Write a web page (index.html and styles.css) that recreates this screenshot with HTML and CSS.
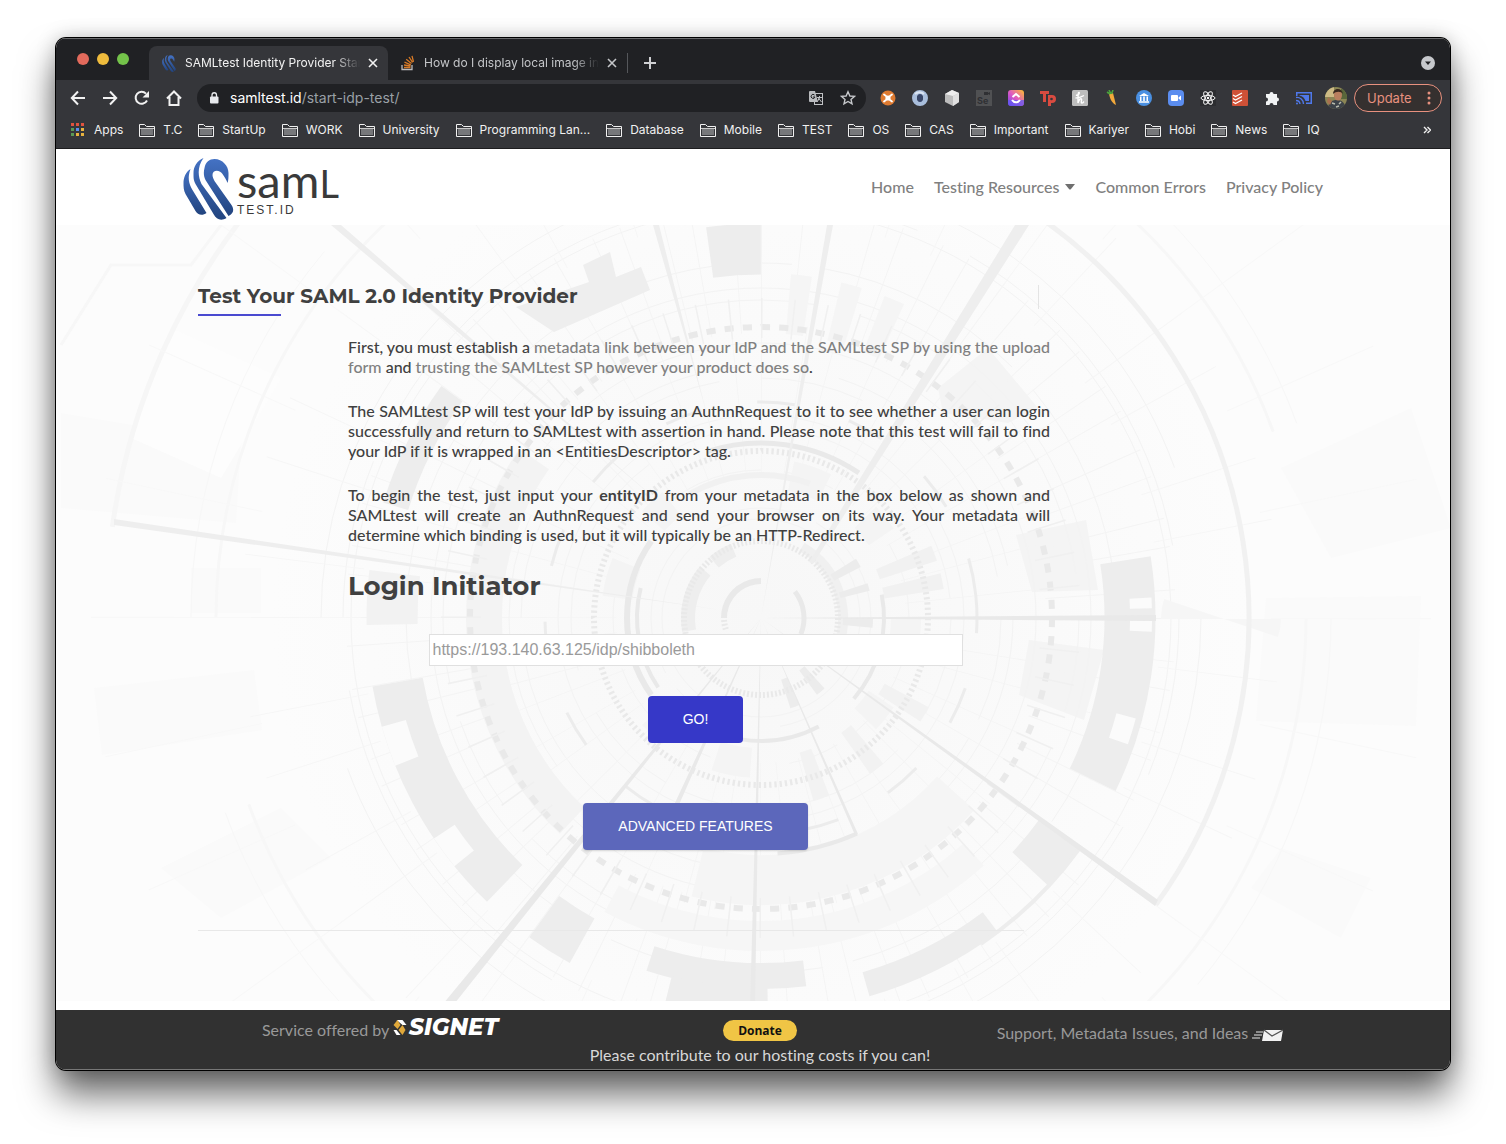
FILE: index.html
```html
<!DOCTYPE html>
<html lang="en">
<head>
<meta charset="utf-8">
<meta name="viewport" content="width=device-width, initial-scale=1">
<title>SAMLtest Identity Provider Start</title>
<link rel="stylesheet" href="styles.css">
</head>
<body>
<svg class="defs" width="0" height="0" aria-hidden="true">
  <defs>
    <linearGradient id="blue" x1="0" y1="0" x2="0" y2="1"><stop offset="0" stop-color="#4472c4"/><stop offset="1" stop-color="#22447f"/></linearGradient>
    <symbol id="swan" viewBox="0 0 50 62">
      <g fill="url(#blue)">
        <path d="M7 11C2 14 0 20 0 25c0 4 0 7 2 11l10 17c2 4 7 5 11 2L9 32C5 25 4 19 7 11z"/>
        <path d="M20 0C13 3 10 9 10 15c0 5 0 7 2 11l18 30c3 6 8 7 13 4L18 26C14 18 14 8 20 0z"/>
        <path d="M21 10C22 4 26 1 31 1c8 0 14 7 14 14 0 4 0 7-1 10-1-3-3-6-5-9-2-4-10-5-10 1 0 2 1 4 2 6l17 24c3 5 2 8-3 11L22 22c-2-4-2-8-1-12z"/>
      </g>
    </symbol>
    <symbol id="folder" viewBox="0 0 16 14">
      <path d="M.5 13.500V1.500h5l2 2h8v10z" fill="none" stroke="#f1f1f1"/>
      <path d="M2 6h12v6H2z" fill="#77787b"/><path d="M1 5.500h14" stroke="#c8c8c8"/>
    </symbol>
    <symbol id="close" viewBox="0 0 10 10"><path d="M1 1l8 8M9 1L1 9" stroke="currentColor" stroke-width="1.600" fill="none"/></symbol>
  </defs>
</svg>

<div class="window">
  <div class="tabstrip">
    <div class="lights"><i class="red"></i><i class="yellow"></i><i class="green"></i></div>
    <div class="tab active">
      <svg width="16" height="17"><use href="#swan"/></svg>
      <span class="tab-title">SAMLtest Identity Provider Start</span>
      <button class="icon-button" aria-label="Close tab"><svg width="10" height="10"><use href="#close"/></svg></button>
    </div>
    <div class="tab">
      <svg width="16" height="16" viewBox="0 0 16 16" fill="none"><path d="M2 10v4.500h10V10" stroke="#bcbbbb" stroke-width="1.300"/><path d="M4 12.500h6.500M4 10l6.500 1M4.500 7.200l6.300 2.600M6.200 4.200l5.300 4.200M9 2l3.600 5.300M12 .8l1.500 6" stroke="#d87a26" stroke-width="1.300"/></svg>
      <span class="tab-title">How do I display local image in</span>
      <button class="icon-button" aria-label="Close tab"><svg width="10" height="10"><use href="#close"/></svg></button>
    </div>
    <button class="icon-button new-tab" aria-label="New tab"><svg width="14" height="14" viewBox="0 0 14 14"><path d="M7 1v12M1 7h12" stroke="#cfd0d3" stroke-width="2"/></svg></button>
    <button class="icon-button tab-search" aria-label="Search tabs"><svg width="14" height="14" viewBox="0 0 14 14"><circle cx="7" cy="7" r="7" fill="#c6c8cc"/><path d="M4 5.500h6L7 9z" fill="#202124"/></svg></button>
  </div>

  <div class="toolbar">
    <div class="nav-buttons">
      <button class="icon-button" aria-label="Back"><svg width="16" height="16" viewBox="0 0 16 16" fill="none" stroke="#f1f1f1" stroke-width="2"><path d="M15 8H2M8 1.500L1.800 8 8 14.500"/></svg></button>
      <button class="icon-button" aria-label="Forward"><svg width="16" height="16" viewBox="0 0 16 16" fill="none" stroke="#f1f1f1" stroke-width="2"><path d="M1 8h13M8 1.500L14.200 8 8 14.500"/></svg></button>
      <button class="icon-button" aria-label="Reload"><svg width="16" height="16" viewBox="0 0 16 16"><path d="M13 10.500A6 6 0 1 1 12 3.600" fill="none" stroke="#f1f1f1" stroke-width="2"/><path d="M15 1v6.500H8.500z" fill="#f1f1f1"/></svg></button>
      <button class="icon-button" aria-label="Home"><svg width="16" height="16" viewBox="0 0 16 16" fill="none" stroke="#f1f1f1" stroke-width="2"><path d="M1 8.500L8 1.500l7 7M3.500 7v8h9V7"/></svg></button>
    </div>
    <div class="address">
      <svg width="10" height="14" viewBox="0 0 10 14"><rect x="1" y="5.500" width="8.500" height="7" rx="1" fill="#e8eaed"/><path d="M3 6V4a2.200 2.200 0 0 1 4.500 0v2" fill="none" stroke="#e8eaed" stroke-width="1.300"/></svg>
      <span class="url"><b>samltest.id</b>/start-idp-test/</span>
      <svg width="16" height="16" viewBox="0 0 16 16"><rect x="6.500" y="3.500" width="8" height="11" fill="none" stroke="#c0c2c5"/><path d="M2 1h5l3 11H2a1 1 0 0 1-1-1V2a1 1 0 0 1 1-1z" fill="#b9bbbe"/><path d="M6.500 5A2 2 0 1 0 7 7H5" fill="none" stroke="#202124"/><path d="M9 7.500h5M11.500 6v1.500l-2 4M10.500 8l3 4" fill="none" stroke="#c0c2c5"/></svg>
      <svg width="16" height="16" viewBox="0 0 16 16"><path d="M8 1.800l1.900 4.200 4.500.4-3.400 3 1 4.500L8 11.500l-4 2.400 1-4.500-3.400-3L6.100 6z" fill="none" stroke="#c6c8cb" stroke-width="1.400"/></svg>
    </div>
    <div class="extensions">
      <svg viewBox="0 0 16 16"><circle cx="8" cy="8" r="7.500" fill="#dd7a31"/><circle cx="8" cy="8" r="2.600" fill="#fff"/><path d="M4 4.500l2 1.500M12 4.500L10 6M4 11.500L6 10M12 11.500L10 10" stroke="#fff" stroke-width="1.800" stroke-linecap="round"/></svg>
      <svg viewBox="0 0 16 16"><circle cx="8" cy="8" r="5.500" fill="none" stroke="#a9bedc" stroke-width="5"/><path d="M3 4a7 7 0 0 1 9 0" fill="none" stroke="#dbe5f3" stroke-width="2"/><ellipse cx="8" cy="8" rx="3" ry="4" fill="#39476a"/></svg>
      <svg viewBox="0 0 16 16"><path d="M8 0l7 3v9l-6 4-8-4V4z" fill="#bcbcbc"/><path d="M1 4l7-4 7 3-6 3z" fill="#ededed"/><path d="M9 6l6-3v9l-6 4z" fill="#e0e0e0"/></svg>
      <svg viewBox="0 0 16 16"><path d="M0 0h16v16H0z" fill="#505153"/><path d="M8 2h4v3H8zM12 3l2-1v3l-2-1z" fill="#2f3033"/><text x="1" y="14" font-family="Inter, sans-serif" font-weight="700" font-size="9" fill="#2f3033">Se</text></svg>
      <svg viewBox="0 0 16 16"><defs><linearGradient id="cu" x1="0" y1="1" x2="1" y2="0"><stop offset="0" stop-color="#7a3cf0"/><stop offset=".5" stop-color="#e05bc0"/><stop offset="1" stop-color="#ffc02b"/></linearGradient></defs><rect width="16" height="16" rx="3" fill="url(#cu)"/><path d="M0 10h16v3a3 3 0 0 1-3 3H3a3 3 0 0 1-3-3z" fill="#5b5bf5" opacity=".7"/><path d="M4.500 7L8 4l3.500 3M4 10c2 3 6 3 8 0" fill="none" stroke="#fff" stroke-width="2"/></svg>
      <svg viewBox="0 0 16 16"><path d="M0 1h9v3H6v8H3V4H0zM8 5h4a3.500 3.500 0 0 1 0 8h-1v3H8z" fill="#d94b40"/><circle cx="11.500" cy="9" r="1.300" fill="#35363a"/></svg>
      <svg viewBox="0 0 16 16"><rect width="16" height="16" rx="1.500" fill="#bdbdbd"/><path d="M4 5c2 1 4-2 3-2.500S6 6 6 13c1-4 3-5 3.500-4s-1 4 .5 4 1.500-1 2-1.500M3.500 8c2 0 6-1 8.500-2.500" fill="none" stroke="#fff" stroke-width="1.400"/></svg>
      <svg viewBox="0 0 16 16"><path d="M5 4l4-1 3 12c-4-2-6-6-7-11z" fill="#f2a93b"/><path d="M6 4L3 2M7 4L5 0M7.500 4L9 0" stroke="#4ba33c" stroke-width="1.600"/></svg>
      <svg viewBox="0 0 16 16"><circle cx="8" cy="8" r="8" fill="#4a90e2"/><path d="M8 3l5 3H3zM4 6.500h1.500V11H4zM7.200 6.500h1.600V11H7.200zM10.500 6.500H12V11h-1.500zM3 11.300h10v1.400H3z" fill="#fff"/></svg>
      <svg viewBox="0 0 16 16"><rect width="16" height="16" rx="4" fill="#5b8def"/><rect x="3" y="5" width="7" height="6" rx="1" fill="#fff"/><path d="M10.500 7.500L13 5.500v5l-2.500-2z" fill="#fff"/></svg>
      <svg viewBox="0 0 16 16"><path d="M0 0h16v16H0z" fill="#2c2d30"/><g fill="none" stroke="#f4f4f4" stroke-width="1"><ellipse cx="8" cy="8" rx="7" ry="2.600"/><ellipse cx="8" cy="8" rx="7" ry="2.600" transform="rotate(60 8 8)"/><ellipse cx="8" cy="8" rx="7" ry="2.600" transform="rotate(120 8 8)"/></g><circle cx="8" cy="8" r="1.200" fill="#fff"/></svg>
      <svg viewBox="0 0 16 16"><rect width="16" height="16" rx="1" fill="#cf5137"/><path d="M1 5l2.500 1.500L10 3M1 8.500L3.500 10 10 6.500M1 12l2.500 1.500L10 10" fill="none" stroke="#fff" stroke-width="1.300"/></svg>
      <svg viewBox="0 0 16 16"><path d="M2 4h3.500a2 2 0 1 1 4 0H13v3.500a2 2 0 1 1 0 4V15H9.500a2 2 0 0 0-4 0H2v-3.500a2 2 0 0 0 0-4z" fill="#f1f3f4"/></svg>
      <svg viewBox="0 0 16 16"><path d="M0 2h16v12h-6v-1.500h4.500v-9h-13V6H0z" fill="#4f78ea"/><path d="M3.500 5h9.500v6H9.500C9 8.500 6.500 6 3.500 5.500z" fill="#4f78ea"/><path d="M0 7.500A6.500 6.500 0 0 1 7.500 14M0 10.500A4 4 0 0 1 4 14" fill="none" stroke="#4f78ea" stroke-width="1.400"/><circle cx="1" cy="13.500" r="1" fill="#4f78ea"/></svg>
    </div>
    <svg class="avatar" viewBox="0 0 22 22"><defs><clipPath id="round"><circle cx="11" cy="11" r="11"/></clipPath></defs><g clip-path="url(#round)"><path d="M0 0h22v22H0z" fill="#8b8655"/><path d="M0 0h9v10H0z" fill="#cdbb85"/><path d="M16 2h6v10h-6z" fill="#59663a"/><path d="M3 22c0-7 4-9 9-9s8 3 9 9z" fill="#3c4248"/><path d="M7 16l3 1M14 17l2-2M11 20l3-1" stroke="#b9bcae" stroke-width="1.500"/><ellipse cx="13" cy="8" rx="4" ry="5.500" fill="#b97f5f"/><path d="M8 7c0-6 9-7 10 0-2-3-7-3-10 0z" fill="#38291f"/><path d="M3 10l4 4-2 4-3-3z" fill="#a9714f"/></g></svg>
    <button class="update">Update<svg width="4" height="14" viewBox="0 0 4 14" fill="#e8917f"><circle cx="2" cy="2" r="1.500"/><circle cx="2" cy="7" r="1.500"/><circle cx="2" cy="12" r="1.500"/></svg></button>
  </div>

  <nav class="bookmarks" aria-label="Bookmarks">
    <a href="#"><svg viewBox="0 0 16 14"><path d="M1 0h3v3H1zM6 0h3v3H6zM11 0h3v3h-3z" fill="#e0533f"/><path d="M1 5h3v3H1zM1 10h3v3H1z" fill="#5a9a55"/><path d="M6 5h3v3H6z" fill="#5b8def"/><path d="M11 5h3v3h-3zM6 10h3v3H6zM11 10h3v3h-3z" fill="#e8b23f"/></svg>Apps</a>
    <a href="#"><svg><use href="#folder"/></svg>T.C</a>
    <a href="#"><svg><use href="#folder"/></svg>StartUp</a>
    <a href="#"><svg><use href="#folder"/></svg>WORK</a>
    <a href="#"><svg><use href="#folder"/></svg>University</a>
    <a href="#"><svg><use href="#folder"/></svg>Programming Lan...</a>
    <a href="#"><svg><use href="#folder"/></svg>Database</a>
    <a href="#"><svg><use href="#folder"/></svg>Mobile</a>
    <a href="#"><svg><use href="#folder"/></svg>TEST</a>
    <a href="#"><svg><use href="#folder"/></svg>OS</a>
    <a href="#"><svg><use href="#folder"/></svg>CAS</a>
    <a href="#"><svg><use href="#folder"/></svg>Important</a>
    <a href="#"><svg><use href="#folder"/></svg>Kariyer</a>
    <a href="#"><svg><use href="#folder"/></svg>Hobi</a>
    <a href="#"><svg><use href="#folder"/></svg>News</a>
    <a href="#"><svg><use href="#folder"/></svg>IQ</a>
    <button class="icon-button more" aria-label="More bookmarks"><svg width="8" height="8" viewBox="0 0 8 8"><path d="M1 1l3 3-3 3M4.500 1l3 3-3 3" fill="none" stroke="#f1f1f1" stroke-width="1.400"/></svg></button>
  </nav>

  <header class="site-header">
    <div class="container header-row">
      <a class="logo" href="#">
        <svg width="51" height="62"><use href="#swan"/></svg>
        <span class="logo-text"><span class="logo-name">sam<small>L</small></span><span class="logo-sub">TEST.ID</span></span>
      </a>
      <nav class="site-nav">
        <a href="#">Home</a>
        <a href="#">Testing Resources<svg width="10" height="6" viewBox="0 0 10 6"><path d="M0 0h10L6 5q-1 1-2 0z" fill="#6f6f6f"/></svg></a>
        <a href="#">Common Errors</a>
        <a href="#">Privacy Policy</a>
      </nav>
    </div>
  </header>

  <main class="hero">
    <svg class="art" viewBox="0 0 1394 776" preserveAspectRatio="xMidYMid slice" aria-hidden="true">
      <defs><radialGradient id="haze"><stop offset="0" stop-color="#f7f7f7"/><stop offset=".6" stop-color="#fafafa"/><stop offset="1" stop-color="#fcfcfc"/></radialGradient></defs>
      <path d="M0 0h1394v776H0z" fill="#fcfcfc"/>
      <g transform="translate(705 393)" fill="none" stroke="#ebebeb">
        <circle r="490" fill="url(#haze)" stroke="none"/>
        <!-- large faint panels -->
        <g fill="#fafafa" stroke="none">
          <path d="M-700-205l180 30-5 80-175-15zM-667 70l160-18 8 60-160 25zM-600 250l120-60 50 50-110 60zM-570-50h70v45h-70zM520-150l130-60 40 120-120 30zM505-20l155-2-5 130-160-5zM520 230l90 30-30 60-90-50z"/>
          <path d="M-590-290l110 50-60 100-90-40z" fill="#fdfdfd"/>
          <path d="M177-230l50-40 50 60-30 15-65-10zM255-83l70-15 12 70-66 2zM268 22l75 10-20 70-65-25z" fill="#f4f4f4"/>
        </g>
        <!-- thin construction circles -->
        <g stroke="#f3f3f3" stroke-width="1">
          <circle r="99"/><circle r="110" pathLength="360" stroke-dasharray="80 20 40 10"/><circle r="148" pathLength="360" stroke-dasharray="50 9 20 31"/><circle r="190" pathLength="360" stroke-dasharray="30 14 70 6"/><circle r="203"/><circle r="240" pathLength="360" stroke-dasharray="25 5 50 10"/><circle r="252" pathLength="360" stroke-dasharray="60 12"/><circle r="275"/><circle r="318" pathLength="360" stroke-dasharray="17 7 40 8"/><circle r="330"/><circle r="355" pathLength="360" stroke-dasharray="35 5"/><circle r="410"/><circle r="418" pathLength="360" stroke-dasharray="22 8 50 10"/><circle r="440" pathLength="360" stroke-dasharray="70 20"/><circle r="545" stroke="#f7f7f7" stroke-width="3" pathLength="360" stroke-dasharray="70 20"/><circle r="570" stroke="#f7f7f7" pathLength="360" stroke-dasharray="40 20"/><circle r="655" stroke="#f6f6f6" stroke-width="5" pathLength="360" stroke-dasharray="32 328" transform="rotate(188)"/>
        </g>
        <!-- fine spokes, drawn as thin slices of wide rings -->
        <g stroke="#f4f4f4">
          <circle r="220" stroke-width="150" pathLength="360" stroke-dasharray=".2 8.800 .2 5.800"/>
          <circle r="350" stroke-width="130" pathLength="360" stroke-dasharray=".15 5.850 .15 3.850"/>
          <circle r="460" stroke-width="120" pathLength="360" stroke-dasharray=".12 6.880 .12 10.880" stroke="#f6f6f6"/>
          <circle r="590" stroke-width="160" pathLength="360" stroke-dasharray=".1 11.900" stroke="#f8f8f8"/>
        </g>
        <!-- broad translucent bands -->
        <g stroke="#f3f3f3">
          <circle r="277" stroke-width="36" pathLength="360" stroke-dasharray="82 278" transform="rotate(133)"/>
          <circle r="262" stroke-width="50" pathLength="360" stroke-dasharray="62 298" transform="rotate(42)" stroke="#f5f5f5"/>
          <circle r="318" stroke-width="30" pathLength="360" stroke-dasharray="70 290" transform="rotate(48)" stroke="#f6f6f6"/>
          <circle r="145" stroke-width="30" pathLength="360" stroke-dasharray="14 20 10 50" stroke="#f4f4f4"/>
          <circle r="315" stroke-width="60" pathLength="360" stroke-dasharray="3.500 5 3.500 4 3.500 341" transform="rotate(-85)" stroke="#f5f5f5"/>
          <circle r="82" stroke-width="10" pathLength="360" stroke-dasharray="85 275" transform="rotate(-60)" stroke="#f0f0f0"/>
          <circle r="73" stroke-width="14" pathLength="360" stroke-dasharray="50 10 18 282" transform="rotate(170)" stroke="#eee"/>
        </g>
        <circle r="97" stroke-width="30" pathLength="360" stroke-dasharray="5 9 4 14 5 323" transform="rotate(-32)" stroke="#ececec"/>
        <circle r="80" stroke-width="30" pathLength="360" stroke-dasharray="6 12 6 336" transform="rotate(48)" stroke="#ececec"/>
        <circle r="155" stroke-width="60" pathLength="360" stroke-dasharray="5 4 5 346" transform="rotate(-23)" stroke="#f1f1f1"/>
        <circle r="165" stroke-width="50" pathLength="360" stroke-dasharray="5 17 5 14 5 314" transform="rotate(28)" stroke="#f2f2f2"/>
        <!-- dark outer blocks -->
        <g stroke="#ededed" stroke-width="51">
          <circle r="369" pathLength="360" stroke-dasharray="35 325" transform="rotate(-9)"/>
          <circle r="369" pathLength="360" stroke-dasharray="7 353" transform="rotate(36)"/>
          <circle r="369" pathLength="360" stroke-dasharray="7 353" transform="rotate(119)"/>
          <circle r="369" pathLength="360" stroke-dasharray="36 324" transform="rotate(134)"/>
          <circle r="369" pathLength="360" stroke-dasharray="8 352" transform="rotate(179)" stroke="#f2f2f2"/>
          <circle r="369" pathLength="360" stroke-dasharray="8 352" transform="rotate(262)"/>
          <circle r="381" stroke-width="25" pathLength="360" stroke-dasharray="21 339" transform="rotate(53)"/>
          <circle r="358" stroke-width="26" pathLength="360" stroke-dasharray="25 335" transform="rotate(83)"/>
          <circle r="382" stroke-width="26" pathLength="360" stroke-dasharray="15 345" transform="rotate(89)"/>
          <circle r="382" stroke-width="26" pathLength="360" stroke-dasharray="19 341" transform="rotate(197)"/>
          <circle r="393" stroke-width="4" pathLength="360" stroke-dasharray="20 340" transform="rotate(36)"/>
        </g>
        <path d="M-245-311l73-25-6-17 27-13 6 25 25-10 9 23-96 42z" fill="#eee" stroke="none"/>
        <g stroke="#fbfbfb" stroke-width="25">
          <circle r="382" pathLength="360" stroke-dasharray="6 354" transform="rotate(158)"/>
          <circle r="382" pathLength="360" stroke-dasharray="5 355" transform="rotate(141)"/>
          <circle r="380" stroke-width="22" pathLength="360" stroke-dasharray="1.600 1.800 1.600 355" transform="rotate(-3)"/>
          <circle r="378" stroke-width="20" pathLength="360" stroke-dasharray="4 356" transform="rotate(15)"/>
        </g>
        <!-- tick rings -->
        <circle r="291" stroke-width="6" pathLength="360" stroke-dasharray="1.800 1.800" stroke="#e9e9e9"/>
        <circle r="300" stroke-width="40" pathLength="360" stroke-dasharray=".3 5.700" stroke="#f0f0f0"/>
        <circle r="167" stroke-width="6" pathLength="360" stroke-dasharray=".8 1" stroke="#e9e9e9"/>
        <circle r="77" stroke-width="6" pathLength="360" stroke-dasharray="1.500 1.500" stroke="#e9e9e9"/>
        <circle r="37" stroke-width="6" pathLength="360" stroke-dasharray="3 3 3 3 3 3 90 252" transform="rotate(162)" stroke="#e9e9e9"/>
        <circle r="43" stroke-width="5" pathLength="360" stroke-dasharray="60 300" stroke="#e9e9e9" transform="rotate(-38)"/>
        <!-- solid arcs -->
        <g stroke="#e9e9e9" stroke-width="4">
          <circle r="123" pathLength="360" stroke-dasharray="52 308" transform="rotate(-11)"/>
          <circle r="123" pathLength="360" stroke-dasharray="38 322" transform="rotate(62)"/>
          <circle r="134" stroke-width="6" pathLength="360" stroke-dasharray="70 290" transform="rotate(145)"/>
          <circle r="124" pathLength="360" stroke-dasharray="48 312" transform="rotate(146)"/>
          <circle r="175" stroke-width="5" pathLength="360" stroke-dasharray="52 308" transform="rotate(-108)"/>
          <circle r="236" pathLength="360" stroke-dasharray="20 340" transform="rotate(66)"/>
          <circle r="143" stroke-width="6" pathLength="360" stroke-dasharray="50 310" transform="rotate(-120)" stroke="#f1f1f1"/>
          <circle r="216" stroke-width="3" pathLength="360" stroke-dasharray="10 15" transform="rotate(-6)" stroke="#ececec"/>
          <circle r="488" stroke-width="5" pathLength="360" stroke-dasharray="90 270" transform="rotate(-54)" stroke="#f1f1f1"/>
        </g>
        <!-- tapering spokes -->
        <g fill="#e9e9e9" stroke="none">
          <path d="M0 0L395-3v6zM0 0L394 288l3-6zM0 0L94 217l3-1zM0 0L-310 390l-8-4zM0 0L-6 390h-5zM0 0l-87 187 4 2z"/>
          <path d="M48-56L254-393h14L52-54zM0 0L66-393h6zM-58-218L-108-393h6zM-102-116L-430-393h10zM-40-8L-647-99v6z" fill="#eee"/>
        </g>
        <path d="M-540-393l-30 40h-80l-50 80" stroke="#f7f7f7" stroke-width="3"/>
      </g>
    </svg>
    <div class="container hero-body">
      <section class="content">
        <h1>Test Your SAML 2.0 Identity Provider</h1>
        <div class="copy">
          <p>First, you must establish a <a href="#">metadata link between your IdP and the SAMLtest SP by using the upload form</a> and <a href="#">trusting the SAMLtest SP however your product does so</a>.</p>
          <p>The SAMLtest SP will test your IdP by issuing an AuthnRequest to it to see whether a user can login successfully and return to SAMLtest with assertion in hand. Please note that this test will fail to find your IdP if it is wrapped in an &lt;EntitiesDescriptor&gt; tag.</p>
          <p>To begin the test, just input your <strong>entityID</strong> from your metadata in the box below as shown and SAMLtest will create an AuthnRequest and send your browser on its way. Your metadata will determine which binding is used, but it will typically be an HTTP-Redirect.</p>
        </div>
        <div class="login-block">
          <h2 id="login">Login Initiator</h2>
          <form class="login" action="#">
            <input type="text" aria-labelledby="login" placeholder="https://193.140.63.125/idp/shibboleth">
            <button class="go" type="submit">GO!</button>
            <button class="advanced" type="button">ADVANCED FEATURES</button>
          </form>
        </div>
      </section>
      <aside class="sidebar"></aside>
    </div>
  </main>

  <footer class="site-footer">
    <div class="footer-row">
      <div class="service">Service offered by
        <a class="signet" href="#"><svg width="14" height="17" viewBox="0 0 13 17"><path d="M3 1h6l4 5H9z" fill="#fff"/><path d="M4 1l3 5-3 4-4-4z" fill="#e0a83a"/><path d="M9 6l3 5-3 5-4-5z" fill="#e0a83a"/><path d="M0 11h3l4 5H3z" fill="#fff"/></svg>SIGNET</a>
      </div>
      <div class="donate-col"><button class="donate">Donate</button><span>Please contribute to our hosting costs if you can!</span></div>
      <div class="support"><a href="#">Support, Metadata Issues, and Ideas <svg width="31" height="14" viewBox="0 0 31 14"><path d="M4 4h7M2 7h8M0 10h8" stroke="#aaa" stroke-width="1.500"/><path d="M12 2h19l-2 11H10z" fill="#f2f2f2"/><path d="M12 2l8 6 11-6" fill="none" stroke="#555" stroke-width="1.300"/></svg></a></div>
    </div>
  </footer>
</div>
</body>
</html>
```
FILE: styles.css
```css
* { box-sizing: border-box; }
body {
  margin: 0;
  padding: 38px 56px 74px;
  background: #fff;
  color: #404040;
  font: 16px/20px Lato, "Open Sans", sans-serif;
  font-variant-ligatures: none;
}
a { color: #808080; text-decoration: none; }
button { border: 0; padding: 0; background: none; font: inherit; color: inherit; cursor: pointer; }
svg { flex: none; }
.defs { position: absolute; }

.window {
  border-radius: 10px;
  overflow: hidden;
  background: #fff;
  box-shadow: 0 0 0 1px #000, 0 0 20px rgba(0, 0, 0, .22), 0 24px 36px rgba(0, 0, 0, .6);
}
.icon-button { display: flex; align-items: center; justify-content: center; }

/* Browser chrome */
.tabstrip, .toolbar, .bookmarks { font-family: Inter, Roboto, sans-serif; font-size: 12px; color: #f1f1f1; }
.tabstrip {
  display: flex;
  align-items: flex-end;
  height: 42px;
  padding-left: 21px;
  background: #202124;
  border-top: 1px solid #696a6c;
}
.lights { display: flex; gap: 8px; width: 72px; padding-bottom: 15px; }
.lights i { width: 12px; height: 12px; border-radius: 50%; }
.red { background: #e26a5c; }
.yellow { background: #efbc3d; }
.green { background: #74c34a; }
.tab { display: flex; align-items: center; gap: 8px; width: 239px; height: 34px; padding: 0 10px 0 12px; color: #c4c6c9; }
.tab.active { background: #35363a; color: #f1f1f1; border-radius: 8px 8px 0 0; }
.tab-title {
  flex: 1;
  min-width: 0;
  overflow: hidden;
  white-space: nowrap;
  -webkit-mask-image: linear-gradient(90deg, #000 85%, transparent);
  mask-image: linear-gradient(90deg, #000 85%, transparent);
}
.new-tab { height: 20px; margin-bottom: 7px; padding-left: 15px; border-left: 1px solid #55575b; }
.tab-search { margin: 0 15px 10px auto; }

.toolbar { display: flex; align-items: center; height: 36px; padding: 0 8px 0 14px; background: #35363a; }
.nav-buttons { display: flex; gap: 16px; width: 127px; }
.address {
  display: flex;
  flex: 1;
  align-items: center;
  gap: 16px;
  height: 28px;
  padding: 0 10px 0 12px;
  margin-right: 14px;
  border-radius: 14px;
  background: #202124;
}
.url { flex: 1; margin-left: -5px; font-size: 14px; color: #9aa0a6; }
.url b { font-weight: 400; color: #fff; }
.extensions { display: flex; gap: 16px; margin-right: 13px; }
.extensions svg { width: 16px; height: 16px; }
.avatar { width: 22px; height: 22px; margin-right: 7px; }
.update {
  display: flex;
  align-items: center;
  justify-content: space-between;
  width: 88px;
  height: 28px;
  padding: 0 10px 0 12px;
  border: 1px solid #e8917f;
  border-radius: 14px;
  background: #35302f;
  color: #e8917f;
  font-size: 13px;
}
.bookmarks {
  display: flex;
  align-items: center;
  gap: 16px;
  height: 33px;
  padding: 0 19px 4px 14px;
  background: #35363a;
  border-bottom: 1px solid #1d1d1f;
}
.bookmarks a { display: flex; align-items: center; gap: 8px; color: #f1f1f1; white-space: nowrap; }
.bookmarks a svg { width: 16px; height: 14px; }
.more { margin-left: auto; }

/* Site header */
.container { width: 100%; max-width: 1140px; margin: 0 auto; }
.site-header { background: #fff; }
.header-row { display: flex; align-items: center; justify-content: space-between; height: 76px; }
.logo { display: flex; align-items: center; gap: 3px; padding-top: 4px; color: #3a3a3a; }
.logo-text { display: flex; flex-direction: column; }
.logo-name { font-size: 47px; line-height: 38px; }
.logo-name small { font-size: 38px; }
.logo-sub { font: 12px/16px "Liberation Sans", sans-serif; letter-spacing: 2px; }
.site-nav { display: flex; gap: 20px; font-weight: 500; }
.site-nav svg { margin: 0 0 3px 6px; }

/* Hero */
.hero { position: relative; padding-bottom: 70px; margin-bottom: 9px; background: #fcfcfc; }
.art { position: absolute; inset: 0; width: 100%; height: 100%; }
.hero-body { position: relative; display: flex; align-items: flex-start; padding-top: 59px; }
.content { width: 75%; padding-left: 15px; }
.sidebar { height: 24px; margin-top: 1px; border-left: 1px solid #e4e4e4; }
h1, h2 { margin: 0; font-family: Montserrat, Inter, sans-serif; font-weight: 700; }
h1 { font-size: 20px; line-height: 24px; }
h1::after { content: ""; display: block; width: 83px; height: 2px; margin-top: 6px; background: #4a4ad0; }
.copy, .login-block { margin-left: 150px; }
.copy { width: 702px; margin-top: 21px; font-weight: 500; text-align: justify; }
.copy p { margin: 0 0 24px; }
.login-block { width: 695px; }
h2 { font-size: 26px; line-height: 35px; }
.login { display: flex; flex-direction: column; align-items: center; padding-top: 30px; }
.login input { width: 534px; height: 32px; padding: 0 3px; border: 1px solid #e0e0e0; border-radius: 0; background: #fff; font: 16px "Liberation Sans", Arial, sans-serif; }
.login input::placeholder { color: #9a9a9a; }
.login button { height: 47px; padding-bottom: 2px; border-radius: 4px; color: #fff; font: 14px/20px "Liberation Sans", Arial, sans-serif; }
.go { width: 95px; margin-top: 30px; background: #3638c8; }
.advanced { width: 225px; margin-top: 60px; background: #5c67bb; box-shadow: 0 1px 2px rgba(0, 0, 0, .15); }
.content::after { content: ""; display: block; width: 826px; margin-top: 80px; border-top: 1px solid #e8e8e8; }

/* Footer */
.site-footer { background: #313131; color: #d8d8d8; border-bottom: 1px solid #777; }
.footer-row { display: grid; grid-template-columns: repeat(3, 1fr); box-sizing: content-box; max-width: 1140px; height: 59px; margin: 0 auto; padding-left: 14px; text-align: center; }
.service { padding-top: 6px; color: #999; }
.signet { display: inline-flex; align-items: center; gap: 2px; color: #fff; font: italic 800 23px/22px Montserrat, Inter, sans-serif; }
.donate-col { display: flex; flex-direction: column; align-items: center; gap: 4px; padding-top: 10px; }
.donate { width: 74px; height: 21px; border-radius: 11px; background: #f0c545; color: #111; font: 700 12px/20px "Open Sans", sans-serif; }
.support { padding-top: 13px; }
.support a { color: #999; }
.support svg { vertical-align: -3px; }
```
